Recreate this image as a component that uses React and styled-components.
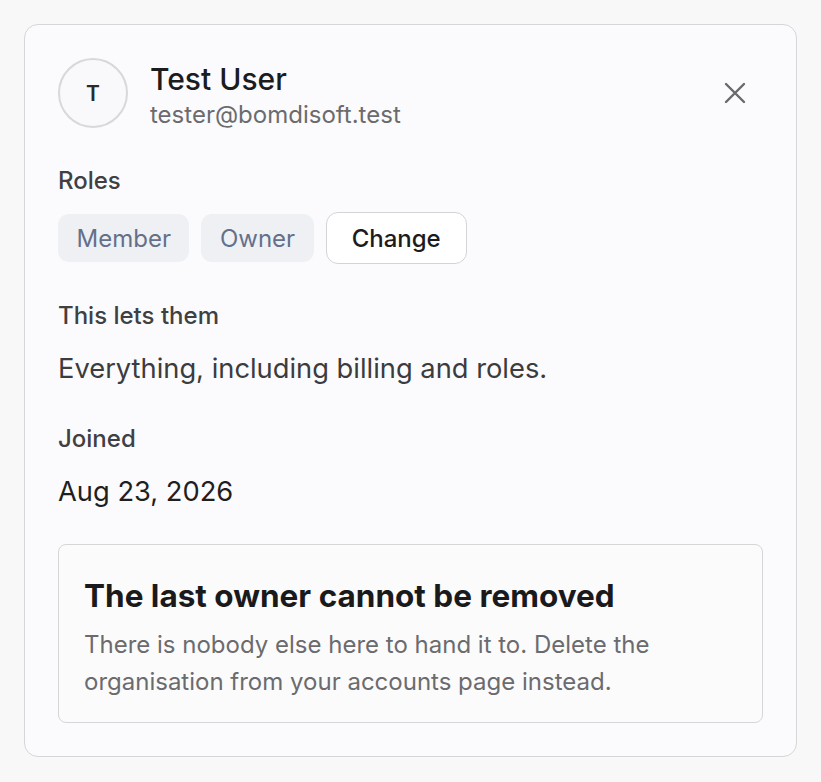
import React from "react";
import styled, { createGlobalStyle } from "styled-components";

const Global = createGlobalStyle`
  html, body { margin: 0; padding: 0; background: #f8f8f9; }
  body { font-family: Inter, "Noto Sans", sans-serif; -webkit-font-smoothing: antialiased; }
  * { box-sizing: border-box; }
`;

const Page = styled.div`
  padding: 24px;
`;

const Card = styled.div`
  background: #fbfbfd;
  border: 1.5px solid #d6d6d8;
  border-radius: 14px;
  padding: 33px;
`;

const Header = styled.div`
  display: flex;
  align-items: center;
  gap: 22px;
  height: 70px;
`;

const Avatar = styled.div`
  width: 70px;
  height: 70px;
  border-radius: 50%;
  border: 2px solid #d8d8da;
  background: #f9f9fb;
  display: flex;
  align-items: center;
  justify-content: center;
  font-size: 21px;
  font-weight: 600;
  color: #2a2a2a;
  flex-shrink: 0;
`;

const Identity = styled.div`
  display: flex;
  flex-direction: column;
  gap: 3px;
  margin-top: 4px;
  flex: 1;
`;

const Name = styled.div`
  font-size: 30px;
  line-height: 36px;
  font-weight: 500;
  color: #1c1c1e;
`;

const Email = styled.div`
  font-size: 24px;
  line-height: 30px;
  color: #6b6b6e;
`;

const CloseButton = styled.button`
  border: 0;
  background: transparent;
  padding: 0;
  margin-right: 16px;
  width: 24px;
  height: 24px;
  display: flex;
  align-items: center;
  justify-content: center;
  color: #69696c;
  cursor: pointer;
`;

const Section = styled.div`
  margin-top: ${(p) => p.$top}px;
`;

const Label = styled.div`
  font-size: 24px;
  line-height: 28px;
  font-weight: 500;
  color: #404043;
`;

const Value = styled.div`
  margin-top: 23px;
  font-size: 27.3px;
  line-height: 32px;
  color: ${(p) => (p.$dark ? "#1f1f21" : "#3c3c3f")};
`;

const Badges = styled.div`
  margin-top: 17px;
  display: flex;
  align-items: center;
  gap: 12px;
`;

const Badge = styled.span`
  height: 48px;
  padding: 0 18.5px;
  display: inline-flex;
  align-items: center;
  border-radius: 11px;
  background: #eef0f4;
  color: #64708a;
  font-size: 24px;
`;

const ChangeButton = styled.button`
  height: 52px;
  padding: 0 25px;
  border: 1.5px solid #d4d4d7;
  border-radius: 12px;
  background: #ffffff;
  font-family: inherit;
  font-size: 24px;
  font-weight: 500;
  color: #1c1c1e;
  cursor: pointer;
`;

const Notice = styled.div`
  margin-top: 36px;
  border: 1.5px solid #d6d6d8;
  border-radius: 8px;
  background: #fbfbfc;
  padding: 32px 25px 22px;
`;

const NoticeTitle = styled.div`
  font-size: 31.5px;
  line-height: 38px;
  font-weight: 700;
  color: #1a1a1c;
`;

const NoticeBody = styled.div`
  margin-top: 11px;
  font-size: 24px;
  line-height: 37px;
  color: #6b6b6e;
`;

const XIcon = () => (
  <svg width="22" height="22" viewBox="0 0 22 22" fill="none" stroke="currentColor" strokeWidth="2.4" strokeLinecap="round">
    <path d="M2 2 L20 20 M20 2 L2 20" />
  </svg>
);

export default function App() {
  return (
    <>
      <Global />
      <Page>
        <Card>
          <Header>
            <Avatar>T</Avatar>
            <Identity>
              <Name>Test User</Name>
              <Email>tester@bomdisoft.test</Email>
            </Identity>
            <CloseButton aria-label="Close">
              <XIcon />
            </CloseButton>
          </Header>

          <Section $top={39}>
            <Label>Roles</Label>
            <Badges>
              <Badge>Member</Badge>
              <Badge>Owner</Badge>
              <ChangeButton>Change</ChangeButton>
            </Badges>
          </Section>

          <Section $top={38}>
            <Label>This lets them</Label>
            <Value>Everything, including billing and roles.</Value>
          </Section>

          <Section $top={40}>
            <Label>Joined</Label>
            <Value $dark>Aug 23, 2026</Value>
          </Section>

          <Notice>
            <NoticeTitle>The last owner cannot be removed</NoticeTitle>
            <NoticeBody>
              There is nobody else here to hand it to. Delete the
              <br />
              organisation from your accounts page instead.
            </NoticeBody>
          </Notice>
        </Card>
      </Page>
    </>
  );
}
